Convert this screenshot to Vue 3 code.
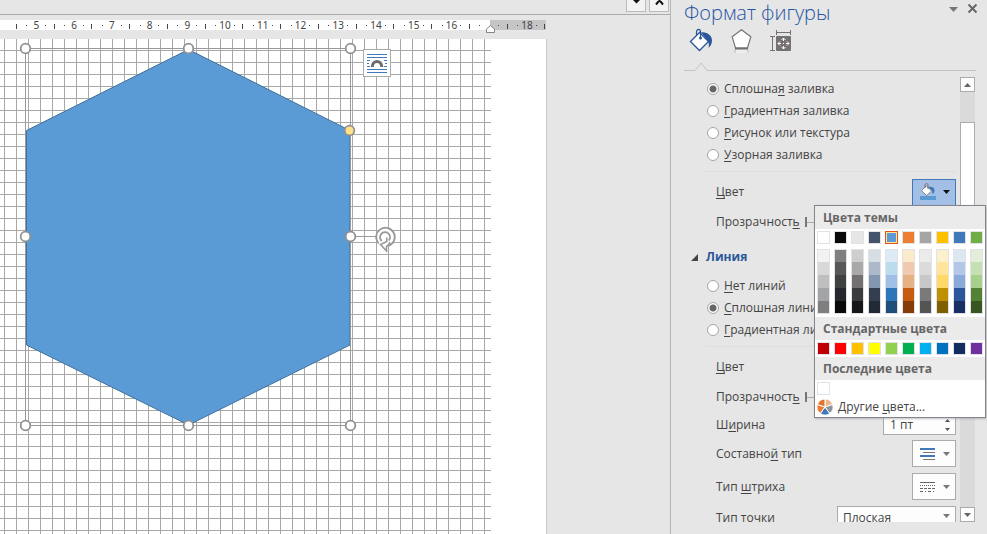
<script setup>
import { ref, computed } from 'vue'

const rulerStart = 36.3
const rulerStep = 37.75
const rulerNumbers = computed(() =>
  Array.from({ length: 14 }, (_, i) => ({ n: i + 5, x: rulerStart + i * rulerStep })).filter((m) => m.n !== 17)
)
const rulerHalves = computed(() => Array.from({ length: 15 }, (_, i) => Math.floor(rulerStart + (i - 0.5) * rulerStep) - 1))
const rulerQuarters = computed(() =>
  Array.from({ length: 28 }, (_, i) => Math.floor(rulerStart + (i * 0.5 - 0.25) * rulerStep)).filter((x) => Math.abs(x - 489) > 6)
)

const handles = [
  [25.5, 48.5], [188.5, 48.5], [350.5, 48.5],
  [25.5, 236.5], [350.5, 236.5],
  [25.5, 425.5], [188.5, 425.5], [350.5, 425.5]
]

const fill = ref('solid')
const fills = [
  { id: 'solid', pre: 'Сплошна', key: 'я', post: ' заливка' },
  { id: 'gradient', pre: '', key: 'Г', post: 'радиентная заливка' },
  { id: 'picture', pre: '', key: 'Р', post: 'исунок или текстура' },
  { id: 'pattern', pre: '', key: 'У', post: 'зорная заливка' }
]
const line = ref('solid')
const lines = [
  { id: 'none', pre: '', key: 'Н', post: 'ет линий' },
  { id: 'solid', pre: '', key: 'С', post: 'плошная линия' },
  { id: 'gradient', pre: '', key: 'Г', post: 'радиентная линия' }
]

const fillAlpha = ref(0)
const lineAlpha = ref(0)
const width = ref('1 пт')
const cap = ref('Плоская')

const selected = ref('#5b9bd5')
const theme = ['#ffffff', '#0a0a0a', '#e7e6e6', '#44546a', '#5b9bd5', '#ed7d31', '#a5a5a5', '#ffc000', '#3f79ba', '#70ad47']
const shades = [
  ['#f1f2f2', '#d8d8d8', '#bfbfbf', '#a3a4a5', '#7f7f7f'],
  ['#7f7f7f', '#575757', '#3f4141', '#24282d', '#0a0a0a'],
  ['#cfcece', '#aaa9a9', '#747070', '#393b3c', '#151718'],
  ['#d6dee4', '#acb9ca', '#8497b0', '#333f50', '#222a35'],
  ['#deebf4', '#bbdcec', '#9fbfe6', '#2e75b9', '#1f4e79'],
  ['#fbeacb', '#efcab0', '#e8b184', '#c55a11', '#843c0b'],
  ['#ebebeb', '#dbdbdb', '#c8c8c8', '#7a7a7a', '#545454'],
  ['#fdf0cd', '#ffe599', '#ffd965', '#bf9000', '#7f6000'],
  ['#dbe7f1', '#b4c7e9', '#8aabd9', '#2b569c', '#172f63'],
  ['#e3edd8', '#c5e0b3', '#a8d08d', '#538135', '#375623']
]
const standard = ['#c00000', '#ff0000', '#ffc000', '#ffff00', '#92d050', '#00b050', '#00b0f0', '#0070c0', '#132c62', '#7030a0']
</script>

<template>
  <div class="app">
    <main class="document">
      <div class="toolbar">
        <button class="tool" aria-label="Параметры">
          <svg width="18" height="11" viewBox="0 0 18 11"><path d="M6 0h7L9.500 3.500z" fill="#111" /></svg>
        </button>
        <button class="tool" aria-label="Закрыть">
          <svg width="18" height="11" viewBox="0 0 18 11"><path d="M6 -4L13 4.500M13 -4L6 4.500" stroke="#111" stroke-width="2" /></svg>
        </button>
      </div>
      <svg class="ruler" width="547" height="19" viewBox="0 0 547 19" aria-label="Линейка">
        <rect width="490" height="10" y="0" fill="#fff" />
        <rect x="490" width="56" height="10" y="0" fill="#c5c5c5" />
        <g fill="#444">
          <rect v-for="x in rulerHalves" :key="'h' + x" :x="x" y="4" width="1" height="5" />
          <rect v-for="x in rulerQuarters" :key="'q' + x" :x="x" y="5" width="1" height="1" />
          <text v-for="m in rulerNumbers" :key="m.n" :x="m.x" y="9" text-anchor="middle">{{ m.n }}</text>
        </g>
        <path d="M486.500 12.500v-3.500l4-3.500 4 3.500v3.500z" fill="#fff" stroke="#858585" />
      </svg>
      <div class="workspace">
        <div class="page"><div class="grid"></div></div>
        <svg class="drawing" width="547" height="495" viewBox="0 39 547 495">
          <polygon points="188.500,49.500 350,130.500 350,345 188.500,425 26.500,345 26.500,130.500" fill="#5b9bd5" stroke="#41719c" />
          <rect x="25.500" y="48.500" width="325" height="377" fill="none" stroke="#999" />
          <path d="M350 236.500H376" stroke="#999" />
          <circle v-for="h in handles" :key="h.join()" :cx="h[0]" :cy="h[1]" r="4.800" fill="#fff" stroke="#919191" stroke-width="1.800" />
          <circle cx="349.500" cy="130.500" r="4.800" fill="#ffe28a" stroke="#919191" stroke-width="1.800" />
          <g stroke="#999" stroke-linejoin="miter">
            <path d="M380.500 244.500A9.300 9.300 0 1 1 388.500 245.800L386.500 251.500z" fill="#fff" stroke="none" />
            <path d="M378.800 243.500A9.300 9.300 0 1 1 388 246" fill="none" stroke-width="1.800" />
            <path d="M381.800 241A5 5 0 1 1 388.800 240.500" fill="none" stroke-width="1.800" />
            <path d="M386.800 237.500v4L380.500 244.500L386.500 251V246.500C388.500 245.500 389.500 244 390 242" fill="none" stroke-width="1.600" />
          </g>
          <g>
            <rect x="363.500" y="49.500" width="27" height="27" fill="#fff" stroke="#ababab" />
            <path d="M367 54.500h20M367 57.500h20M367 60.500h3M384 60.500h3M367 63.500h2M385 63.500h2M367 66.500h3M384 66.500h3M367 69.500h20M367 72.500h20" stroke="#3f79ba" />
            <path d="M372.300 67c0-7.500 9.400-7.500 9.400 0" fill="none" stroke="#6d6d6d" stroke-width="3" />
          </g>
        </svg>
      </div>
    </main>

    <aside class="panel">
      <header class="head">
        <h1>Формат фигуры</h1>
        <button class="plain" aria-label="Меню области"><svg width="10" height="12"><path d="M0 4h9L4.500 9z" fill="#777" /></svg></button>
        <button class="plain" aria-label="Закрыть область"><svg width="12" height="12"><path d="M1.500 1.500l8 8M9.500 1.500l-8 8" stroke="#666" stroke-width="2" /></svg></button>
      </header>
      <nav class="tabs">
        <button class="plain" aria-label="Заливка и границы">
          <svg width="26" height="26" viewBox="0 0 26 26">
            <path d="M13 4.500c6-1 11 3 11 8 0 3-1.500 6-3.500 7.500.8-3 .3-5-1-7.500z" fill="#2b579a" />
            <path d="M2.500 13.500L11.500 4.500l9 9-9 9z" fill="#fff" stroke="#2b579a" stroke-width="1.400" />
            <path d="M8.500 7V4c0-3.500 4-3.500 4 0v5.500" fill="none" stroke="#2b579a" stroke-width="1.200" />
            <circle cx="12.500" cy="10" r="1.500" fill="#2b579a" />
          </svg>
        </button>
        <button class="plain" aria-label="Эффекты">
          <svg width="26" height="26" viewBox="0 0 26 26">
            <path d="M7 21.500v3M20 21.500v3" stroke="#cfcfcf" stroke-width="2" />
            <path d="M8 22h11v3H8z" fill="#ededed" />
            <path d="M13.500 1.800l9.300 7L19.500 20h-12L4.200 8.800z" fill="#fff" stroke="#767171" stroke-width="1.200" />
            <path d="M7 20.500h13" stroke="#767171" stroke-width="2" />
          </svg>
        </button>
        <button class="plain" aria-label="Макет и свойства">
          <svg width="26" height="26" viewBox="0 0 26 26">
            <path d="M8.500 2v5M22.500 2v5M8.500 4.500h14M2 8.500h5M2 22.500h5M4.500 8.500v14" stroke="#767171" fill="none" />
            <rect x="8" y="8" width="15" height="15" rx="1" fill="#767171" />
            <path d="M15.500 10v3M15.500 18v3M10 15.500h3M18 15.500h3M15 15.500h1" stroke="#fff" />
            <path d="M13.500 12l2-2 2 2M13.500 19l2 2 2-2M12 13.500l-2 2 2 2M19 13.500l2 2-2 2" fill="none" stroke="#fff" />
          </svg>
        </button>
      </nav>
      <div class="notch">
        <svg width="34" height="10"><path d="M0 8.500h11l6-7.500 6 7.500H34" fill="none" stroke="#c3c3c3" /></svg>
        <span></span>
      </div>

      <div class="body">
        <div class="options">
          <div class="radios">
            <label v-for="f in fills" :key="f.id" class="radio">
              <input v-model="fill" type="radio" name="fill" :value="f.id" />
              <span>{{ f.pre }}<u>{{ f.key }}</u>{{ f.post }}</span>
            </label>
          </div>
          <hr />
          <div class="row">
            <label for="fillColor"><u>Ц</u>вет</label>
            <button id="fillColor" class="pick active">
              <svg width="18" height="18" viewBox="0 0 18 18">
                <path d="M9 4c4-1 7 .5 6.500 4.500l-1.500 3-1.500-4z" fill="#3f79ba" />
                <path d="M2.500 7.500l5-4.500 5 5-5 4.500z" fill="#fff" stroke="#767171" stroke-width=".8" />
                <path d="M6 5V2c0-2 3-2 3 0v4" fill="none" stroke="#767171" />
                <rect x="1" y="13" width="16" height="4" fill="#5b9bd5" />
              </svg>
              <svg width="7" height="4"><path d="M0 0h7L3.500 4z" fill="#111" /></svg>
            </button>
          </div>
          <div class="row">
            <label for="fillAlpha">Прозрачност<u>ь</u></label>
            <input id="fillAlpha" v-model="fillAlpha" class="slider" type="range" min="0" max="100" />
          </div>
          <h2><svg width="7" height="7"><path d="M7 0v7H0z" fill="#444" /></svg>Линия</h2>
          <div class="radios">
            <label v-for="l in lines" :key="l.id" class="radio">
              <input v-model="line" type="radio" name="line" :value="l.id" />
              <span>{{ l.pre }}<u>{{ l.key }}</u>{{ l.post }}</span>
            </label>
          </div>
          <hr />
          <div class="row">
            <label for="lineColor"><u>Ц</u>вет</label>
            <button id="lineColor" class="pick"><svg width="7" height="4"><path d="M0 0h7L3.500 4z" fill="#666" /></svg></button>
          </div>
          <div class="row">
            <label for="lineAlpha">Прозрачност<u>ь</u></label>
            <input id="lineAlpha" v-model="lineAlpha" class="slider" type="range" min="0" max="100" />
          </div>
          <div class="row short">
            <label for="lineWidth">Ш<u>и</u>рина</label>
            <div class="spin">
              <input id="lineWidth" v-model="width" type="text" />
              <div class="arrows">
                <button class="plain" aria-label="Больше"><svg width="5" height="3"><path d="M0 3h5L2.500 0z" fill="#555" /></svg></button>
                <button class="plain" aria-label="Меньше"><svg width="5" height="3"><path d="M0 0h5L2.500 3z" fill="#555" /></svg></button>
              </div>
            </div>
          </div>
          <div class="row tall">
            <label for="compound">Составно<u>й</u> тип</label>
            <button id="compound" class="pick">
              <svg width="18" height="14"><path d="M1 2h15M1 9h15" stroke="#3f79ba" stroke-width="2" /><path d="M4 5.500h12M4 12.500h12" stroke="#777" /></svg>
              <svg width="7" height="4"><path d="M0 0h7L3.500 4z" fill="#777" /></svg>
            </button>
          </div>
          <div class="row tall">
            <label for="dash">Тип <u>ш</u>триха</label>
            <button id="dash" class="pick">
              <svg width="18" height="14" stroke="#666"><path d="M1 2.500h15" /><path d="M1 5.500h15" stroke-dasharray="1 1" /><path d="M1 8.500h15" stroke-dasharray="3 1" /><path d="M1 11.500h15" stroke-dasharray="3 2 1 2" /></svg>
              <svg width="7" height="4"><path d="M0 0h7L3.500 4z" fill="#777" /></svg>
            </button>
          </div>
          <div class="row">
            <label for="cap">Тип точки</label>
            <div class="combo">
              <select id="cap" v-model="cap"><option>Плоская</option><option>Квадратная</option><option>Круглая</option></select>
              <svg width="7" height="4"><path d="M0 0h7L3.500 4z" fill="#777" /></svg>
            </div>
          </div>
        </div>
        <div class="scrollbar">
          <button aria-label="Вверх"><svg width="7" height="4"><path d="M0 4h7L3.500 0z" fill="#666" /></svg></button>
          <div class="track"><div class="thumb"></div></div>
          <button aria-label="Вниз"><svg width="7" height="4"><path d="M0 0h7L3.500 4z" fill="#666" /></svg></button>
        </div>
      </div>

      <section class="palette">
        <h3>Цвета темы</h3>
        <div class="swatches">
          <button v-for="c in theme" :key="c" class="swatch" :class="{ chosen: c === selected }" :style="{ background: c }" :aria-label="c" @click="selected = c"></button>
        </div>
        <div class="swatches shades">
          <div v-for="(col, i) in shades" :key="i" class="column">
            <button v-for="c in col" :key="c" class="shade" :style="{ background: c }" :aria-label="c" @click="selected = c"></button>
          </div>
        </div>
        <h3>Стандартные цвета</h3>
        <div class="swatches">
          <button v-for="c in standard" :key="c" class="swatch" :style="{ background: c }" :aria-label="c"></button>
        </div>
        <h3>Последние цвета</h3>
        <div class="swatches recent"><button class="swatch white" aria-label="Белый"></button></div>
        <button class="more">
          <svg width="16" height="16" viewBox="-8 -8 16 16" stroke="#fff">
            <path d="M0 0V-8A8 8 0 0 1 7.600-2.500z" fill="#ebb48a" />
            <path d="M0 0L7.600-2.500A8 8 0 0 1 4.700 6.500z" fill="#8a939c" />
            <path d="M0 0L4.700 6.500A8 8 0 0 1-4.700 6.500z" fill="#3f79ba" />
            <path d="M0 0L-4.700 6.500A8 8 0 0 1-7.600-2.500z" fill="#ed7d31" />
            <path d="M0 0L-7.600-2.500A8 8 0 0 1 0-8z" fill="#e0762f" />
          </svg>
          <span>Другие <u>ц</u>вета...</span>
        </button>
      </section>
    </aside>
  </div>
</template>

<style>
body { background: #e6e6e6; }
</style>

<style scoped>
* { box-sizing: border-box; }
.app {
  display: flex;
  height: 100vh;
  overflow: hidden;
  background: #e6e6e6;
  color: #444;
  font: 12px/16px "Open Sans", "Noto Sans", sans-serif;
}
svg { display: block; flex: none; }
button { font: inherit; color: inherit; padding: 0; }
u { text-underline-offset: 2px; }

.document { flex: 1; min-width: 0; display: flex; flex-direction: column; }
.toolbar {
  display: flex;
  justify-content: flex-end;
  align-items: flex-start;
  gap: 3px;
  height: 15px;
  padding-right: 1px;
  border-bottom: 1px solid #ababab;
}
.tool { width: 20px; height: 12px; background: #f3f3f3; border: 1px solid #bbb; border-top: 0; }
.ruler { margin-top: 5px; font-family: "Noto Sans", sans-serif; font-size: 10px; overflow: visible; }
.workspace { position: relative; flex: 1; min-height: 0; }
.page { width: 547px; height: 100%; padding-right: 55px; background: #fff; border-right: 1px solid #c6c6c6; }
.grid {
  height: 100%;
  background-image: linear-gradient(90deg, #a8a8a8 1px, transparent 1px), linear-gradient(#a8a8a8 1px, transparent 1px);
  background-size: 12px 12px;
  background-position: 4px 11px;
}
.drawing { position: absolute; left: 0; top: 0; }

.panel {
  position: relative;
  flex: none;
  width: 317px;
  display: flex;
  flex-direction: column;
  padding: 0 11px 12px 13px;
  border-left: 1px solid #b5b5b5;
}
.plain { border: 0; background: none; }
.head { display: flex; gap: 8px; align-items: flex-start; padding-top: 1px; margin-right: -3px; height: 28px; }
.head .plain { margin-top: 2px; }
h1 { flex: 1; margin: 0; font: 300 20px/24px "Open Sans", "Noto Sans", sans-serif; color: #1f55a5; }
.tabs { display: flex; gap: 14px; padding-left: 4px; }
.notch { display: flex; align-items: flex-end; height: 18px; }
.notch span { flex: 1; height: 1px; margin-bottom: 1px; background: #c3c3c3; }

.body { flex: 1; min-height: 0; display: flex; gap: 4px; margin-top: 5px; padding-right: 1px; overflow: hidden; }
.options { flex: 1; min-width: 0; padding-top: 1px; }
.radios { padding-left: 23px; }
.radio { display: flex; align-items: center; gap: 5px; height: 22px; white-space: nowrap; }
.radio input {
  appearance: none;
  width: 12px;
  height: 12px;
  margin: 0;
  border: 1px solid #a5a5a5;
  border-radius: 50%;
  background: #fff;
}
.radio input:checked { background: radial-gradient(circle, #666 0 3px, #fff 4px); }
hr { height: 1px; margin: 5px 0 5px 22px; border: 0; background: #dedede; }
.row { display: flex; align-items: center; justify-content: space-between; height: 30px; padding-left: 32px; }
.row.short { height: 25px; }
.row.tall { height: 33px; }
.row label { white-space: nowrap; }
h2 {
  display: flex;
  align-items: center;
  gap: 8px;
  height: 38px;
  margin: 0;
  padding: 2px 0 0 7px;
  font-size: 12px;
  line-height: 16px;
  color: #2b579a;
}
.pick {
  display: flex;
  align-items: center;
  justify-content: flex-end;
  gap: 6px;
  width: 44px;
  height: 27px;
  padding-right: 5px;
  border: 1px solid #ababab;
  background: #fdfdfd;
}
.pick.active { background: #a3bfe6; border-color: #3f79ba; }
.slider { appearance: none; width: 151px; height: 10px; margin: 0; background: linear-gradient(#ababab, #ababab) center / 100% 1px no-repeat; }
.slider::-webkit-slider-thumb { appearance: none; width: 2px; height: 10px; background: #777; }
.spin { display: flex; width: 73px; height: 20px; border: 1px solid #ababab; background: #fdfdfd; }
.spin input { flex: 1; min-width: 0; padding: 0 0 0 6px; border: 0; background: none; color: inherit; font: inherit; }
.arrows { display: flex; flex-direction: column; justify-content: space-around; padding-right: 5px; }
.combo { position: relative; display: flex; align-items: center; width: 119px; }
.combo select {
  appearance: none;
  width: 100%;
  height: 24px;
  padding: 0 5px;
  border: 1px solid #ababab;
  border-radius: 0;
  background: #fdfdfd;
  color: inherit;
  font: inherit;
}
.combo svg { position: absolute; right: 6px; top: 8px; pointer-events: none; }

.scrollbar { display: flex; flex-direction: column; width: 15px; }
.scrollbar button {
  display: flex;
  align-items: center;
  justify-content: center;
  height: 15px;
  border: 1px solid #ababab;
  background: #fdfdfd;
}
.track { flex: 1; padding-top: 30px; background: #dadada; }
.thumb { height: 100px; border: 1px solid #ababab; background: #fff; }

.palette {
  position: absolute;
  top: 205px;
  right: 1px;
  width: 172px;
  border: 1px solid #84848e;
  background: #fff;
  box-shadow: 1px 1px 2px #9999;
}
h3 { margin: 0; padding: 0 8px; font-size: 12px; line-height: 23px; color: #666; background: #ebebeb; white-space: nowrap; }
.swatches { display: flex; gap: 4px; padding: 2px; }
.swatch { width: 13px; height: 13px; border: 1px solid #e2e2e6; }
.swatch.chosen { border-color: #e8501c; box-shadow: inset 0 0 0 1px #ffe294; }
.swatch.white { background: #fff; }
.shades { padding: 3px 2px; }
.column { display: flex; flex-direction: column; width: 13px; border: 1px solid #e2e2e6; }
.shade { height: 13px; border: 0; }
.shade:first-child, .shade:last-child { height: 12px; }
.recent { padding-bottom: 1px; }
.more { display: flex; align-items: center; gap: 5px; width: 100%; height: 21px; padding: 0 2px; border: 0; background: none; }
</style>
